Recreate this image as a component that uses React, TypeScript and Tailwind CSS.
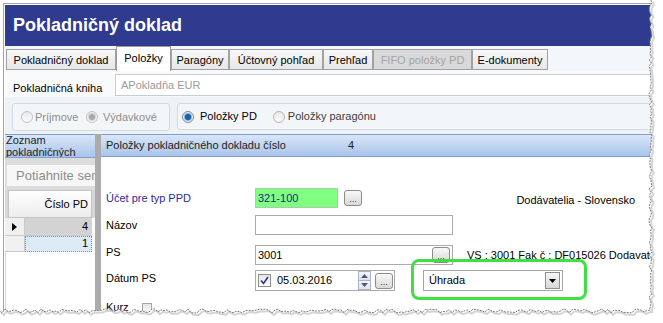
import React from 'react';

const tabs = [
  { label: 'Pokladničný doklad', w: 'w-[110px]' },
  { label: 'Položky', w: 'w-[55px]', active: true },
  { label: 'Paragóny', w: 'w-[58px]' },
  { label: 'Účtovný pohľad', w: 'w-[94px]' },
  { label: 'Prehľad', w: 'w-[50px]' },
  { label: 'FIFO položky PD', w: 'w-[99px]', disabled: true },
  { label: 'E-dokumenty', w: 'w-[76px]' },
];

function Radio({ checked, disabled }: { checked?: boolean; disabled?: boolean }) {
  const ring = disabled ? 'border-[#c3c3c3]' : checked ? 'border-[#7a8796]' : 'border-[#b5b5b5]';
  return (
    <span
      className={`flex h-[12px] w-[12px] shrink-0 items-center justify-center rounded-full border bg-linear-to-b from-[#e9e9e9] to-[#fbfbfb] ${ring}`}
    >
      {checked && (
        <span
          className={`h-[6px] w-[6px] rounded-full ${
            disabled ? 'bg-[#a9a9a9] ring-1 ring-[#d6d6d6]' : 'bg-[#1c5fa6] ring-1 ring-[#7fb2de]'
          }`}
        />
      )}
    </span>
  );
}

function DotsButton({ className = '' }: { className?: string }) {
  return (
    <div
      className={`flex h-[16px] w-[18px] shrink-0 items-end justify-center rounded-[3px] border border-[#8c8c8c] bg-linear-to-b from-[#f8f8f8] to-[#d9d9d9] pb-[1px] text-[9px] leading-[9px] text-[#333] ${className}`}
    >
      ...
    </div>
  );
}

function TornEdge() {
  let s = 11;
  const rnd = () => {
    s = (s * 9301 + 49297) % 233280;
    return s / 233280;
  };
  const edge: number[][] = [];
  for (let y = 0; y <= 310; y += 3) edge.push([649 + rnd() * 3, y]);
  for (let x = 650; x >= -3; x -= 3) edge.push([x, 309 + rnd() * 4]);
  const pts = edge.map((p) => `${p[0].toFixed(1)},${p[1].toFixed(1)}`).join(' ');
  const shadow = edge.map((p) => `${(p[0] + 2).toFixed(1)},${(p[1] + 2).toFixed(1)}`).join(' ');
  return (
    <svg className="pointer-events-none absolute left-0 top-0" width="663" height="323">
      <polygon points={`663,0 ${pts} 0,323 663,323`} fill="#ffffff" />
      <polyline points={shadow} fill="none" stroke="#d4d4d4" strokeWidth="2" />
      <polyline points={pts} fill="none" stroke="#7d7d7d" strokeWidth="1" strokeDasharray="2 1" />
    </svg>
  );
}

export default function App() {
  return (
    <div className="relative h-[323px] w-[663px] overflow-hidden bg-white font-['Liberation_Sans',Arial,sans-serif] text-[11px] leading-[13px] text-black">
      <div className="ml-[3px] mt-[3px] flex h-[320px] w-[660px] flex-col border-l border-t border-[#a3a3a3] pl-px pt-px">
        {/* title */}
        <div className="flex h-[41px] shrink-0 items-center bg-[#2e3b8f] pl-[8px] text-[18px] font-bold text-white">
          Pokladničný doklad
        </div>

        {/* tabs */}
        <div className="flex h-[25px] shrink-0 items-end bg-[#f3f6fa] pl-px">
          {tabs.map((t) =>
            t.active ? (
              <div
                key={t.label}
                className={`${t.w} flex h-[25px] justify-center border border-b-0 border-[#9c9c9c] bg-white pt-[5px]`}
              >
                {t.label}
              </div>
            ) : (
              <div
                key={t.label}
                className={`${t.w} mb-px flex h-[21px] items-center justify-center border border-[#a2a2a2] pt-[2px] ${
                  t.disabled ? 'bg-[#d9d9d9] text-[#a3a3a3]' : 'bg-linear-to-b from-[#f8f8f8] to-[#e7e7e7]'
                }`}
              >
                {t.label}
              </div>
            )
          )}
        </div>

        {/* cash book */}
        <div className="flex h-[26px] shrink-0 bg-[#f8fafc]">
          <div className="w-[110px] pl-[8px] pt-[11px]">Pokladničná kniha</div>
          <div className="mt-[3px] flex h-[22px] flex-1 items-center border border-[#c6cdd6] bg-white pl-[5px] text-[#9b9b9b]">
            APokladňa EUR
          </div>
        </div>

        {/* radio groups */}
        <div className="flex h-[37px] shrink-0 bg-[#eef2f7] pl-[7px] pt-[6px]">
          <div className="flex h-[28px] w-[158px] items-center rounded-[3px] border border-[#d3d9e0] bg-[#f3f6f9] pl-[8px] text-[#8e8e8e]">
            <Radio disabled />
            <span className="ml-[2px] w-[51px] whitespace-nowrap">Príjmove</span>
            <Radio checked disabled />
            <span className="ml-[5px] whitespace-nowrap">Výdavkové</span>
          </div>
          <div className="ml-[7px] flex h-[27px] flex-1 items-center rounded-[3px] border border-[#d3d9e0] bg-[#f3f6f9] pl-[4px]">
            <Radio checked />
            <span className="ml-[6px]">Položky PD</span>
            <span className="ml-[16px]" />
            <Radio />
            <span className="ml-[3px] text-[#404040]">Položky paragónu</span>
          </div>
        </div>

        {/* split area */}
        <div className="flex flex-1">
          {/* left list */}
          <div className="flex w-[90px] shrink-0 flex-col bg-white">
            <div className="h-[24px] shrink-0 overflow-hidden border-y border-[#7d9dd3] bg-linear-to-b from-[#d9e6f7] to-[#a9c4ea] pl-px leading-[12px] text-[#222]">
              <div className="-mt-[1px]">Zoznam pokladničných</div>
            </div>
            <div className="h-[32px] shrink-0 bg-[#dcdcdc] pl-[2px] pt-[7px]">
              <div className="flex h-[21px] w-[88px] items-center overflow-hidden whitespace-nowrap bg-[#f7f7f7] pl-[9px] text-[13px] text-[#8d8d8d]">
                Potiahnite sem
              </div>
            </div>
            <div className="flex h-[28px] shrink-0 bg-[#d6d6d6] pl-[3px]">
              <div className="flex h-[28px] w-[84px] items-center justify-end border border-[#c4c4c4] bg-linear-to-b from-[#ffffff] to-[#ececec] pr-[3px]">
                Číslo PD
              </div>
            </div>
            <div className="flex h-[18px] shrink-0">
              <div className="flex w-[20px] items-center justify-center border-b border-r border-[#c9c9c9] bg-[#f0f0f0]">
                <svg width="5" height="8" viewBox="0 0 5 8">
                  <path d="M0 0 L5 4 L0 8 Z" fill="#000" />
                </svg>
              </div>
              <div className="flex w-[67px] items-center justify-end border-b border-[#c9c9c9] bg-[#d3d3d3] pr-[4px]">4</div>
            </div>
            <div className="flex h-[16px] shrink-0">
              <div className="w-[20px] border-b border-r border-[#c9c9c9] bg-[#f0f0f0]" />
              <div className="flex w-[67px] items-start justify-end border border-dotted border-[#8a8a8a] bg-[#dce9f6] pr-[3px]">1</div>
            </div>
            <div className="flex-1 border-l border-[#d9d9d9] bg-white" />
          </div>

          {/* splitter */}
          <div className="w-[6px] shrink-0 bg-[#ababab]" />

          {/* right form */}
          <div className="flex flex-1 flex-col">
            <div className="flex h-[23px] shrink-0 items-center border-y border-[#7d9dd3] bg-linear-to-b from-[#d9e6f7] to-[#a9c4ea] pl-[5px] text-[#1d1d1d]">
              <span className="w-[242px]">Položky pokladničného dokladu číslo</span>
              <span>4</span>
            </div>
            <div className="flex-1 bg-white pl-[5px] pt-[31px]">
              <div className="flex h-[20px] items-center">
                <span className="w-[149px] text-[#2b2b9c]">Účet pre typ PPD</span>
                <div className="flex h-[20px] w-[83px] items-center border border-[#a8cca8] bg-[#80ff80] pl-[2px] text-[#1a2a86]">
                  321-100
                </div>
                <DotsButton className="ml-[6px]" />
                <span className="ml-auto mr-[28px] mt-[4px]">Dodávatelia - Slovensko</span>
              </div>

              <div className="mt-[7px] flex h-[20px] items-center">
                <span className="w-[149px]">Názov</span>
                <div className="h-[20px] w-[198px] border border-[#ababab] bg-white" />
              </div>

              <div className="mt-[10px] flex h-[20px] items-center">
                <span className="w-[149px] self-start mt-px">PS</span>
                <div className="flex h-[20px] w-[198px] items-center border border-[#ababab] bg-white pl-[2px]">
                  3001
                  <DotsButton className="ml-auto mr-[2px]" />
                </div>
                <span className="ml-[14px] whitespace-nowrap">VS : 3001 Fak č : DF015026 Dodavateľ</span>
              </div>

              <div className="mt-[5px] flex h-[21px] items-center">
                <span className="w-[149px] self-start mt-[2px]">Dátum PS</span>
                <div className="flex h-[21px] w-[140px] items-center border border-[#ababab] bg-white">
                  <div className="ml-[2px] flex h-[13px] w-[13px] items-center justify-center border border-[#8e8f8f] bg-linear-to-b from-[#e6e6e6] to-[#fdfdfd]">
                    <svg width="9" height="9" viewBox="0 0 9 9">
                      <path d="M1 4.5 L3.5 7.5 L8 1" fill="none" stroke="#26349a" strokeWidth="1.6" />
                    </svg>
                  </div>
                  <span className="ml-[6px]">05.03.2016</span>
                  <div className="ml-auto flex h-[19px] w-[13px] flex-col border border-[#a9b3c4]">
                    <div className="flex flex-1 items-center justify-center border-b border-[#a9b3c4] bg-linear-to-b from-[#f4f6fb] to-[#dde3ee]">
                      <svg width="7" height="4" viewBox="0 0 7 4">
                        <path d="M0 4 L3.5 0 L7 4 Z" fill="#4b5a7a" />
                      </svg>
                    </div>
                    <div className="flex flex-1 items-center justify-center bg-linear-to-b from-[#f4f6fb] to-[#dde3ee]">
                      <svg width="7" height="4" viewBox="0 0 7 4">
                        <path d="M0 0 L3.5 4 L7 0 Z" fill="#4b5a7a" />
                      </svg>
                    </div>
                  </div>
                  <DotsButton className="ml-[4px] mr-px" />
                </div>

                <div className="ml-[28px] flex h-[21px] w-[140px] items-center border border-[#a5a5a5] bg-white pl-[5px]">
                  Úhrada
                  <div className="ml-auto mr-[2px] flex h-[17px] w-[15px] items-center justify-center border border-[#8f8f8f] bg-linear-to-b from-[#f6f6f6] to-[#d8d8d8]">
                    <svg width="7" height="4" viewBox="0 0 7 4">
                      <path d="M0 0 L7 0 L3.5 4 Z" fill="#000" />
                    </svg>
                  </div>
                </div>
              </div>

              <div className="mt-[10px] flex items-center">
                <span className="w-[36px]">Kurz</span>
                <div className="h-[10px] w-[10px] border border-[#a5a5a5] bg-linear-to-b from-[#e4e4e4] to-[#f8f8f8]" />
              </div>
            </div>
          </div>
        </div>
      </div>

      {/* annotation highlight */}
      <div className="pointer-events-none absolute left-[411px] top-[259px] h-[41px] w-[176px] rounded-[8px] border-[3px] border-[#3fe03f]" />

      <TornEdge />
    </div>
  );
}
